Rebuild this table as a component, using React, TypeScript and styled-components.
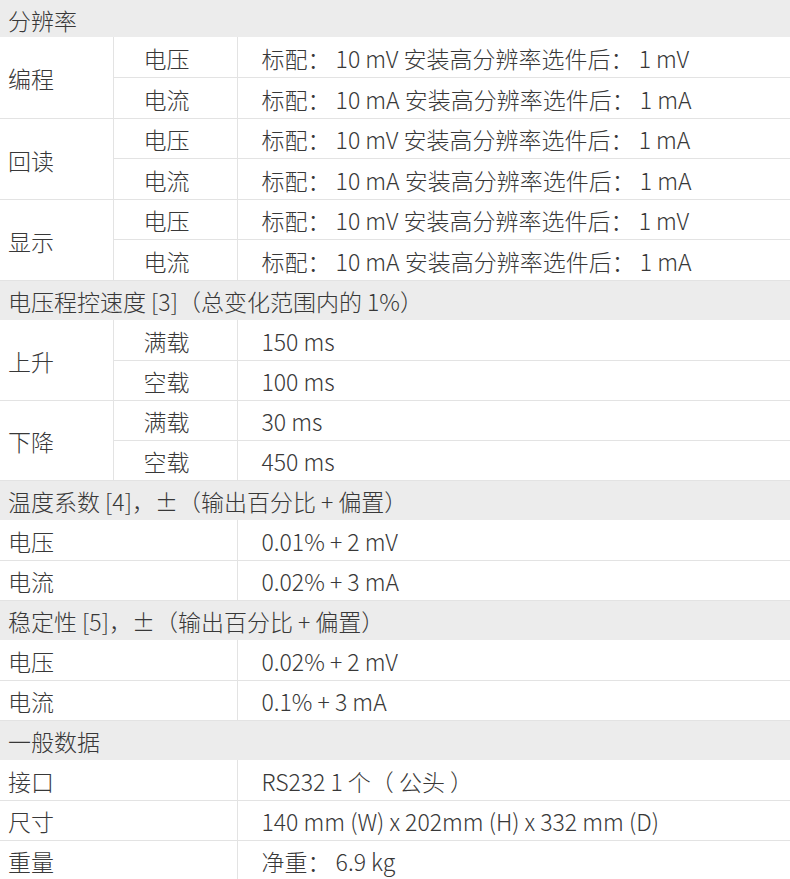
import React from 'react';
import styled, { createGlobalStyle } from 'styled-components';

const GlobalStyle = createGlobalStyle`
	html, body {
		margin: 0;
		padding: 0;
		background: #ffffff;
	}
	body {
		font-family: "Noto Sans CJK SC", "Noto Sans", sans-serif;
		font-weight: 300;
		color: #383838;
	}
`;

const Table = styled.table`
	width: 790px;
	border-collapse: collapse;
	table-layout: fixed;
	font-size: 23px;
	line-height: 1;
`;

const Col = styled.col<{ w?: number }>`
	width: ${({ w }) => (w ? `${w}px` : 'auto')};
`;

const HeadRow = styled.tr<{ h?: number }>`
	height: ${({ h }) => h || 40}px;
	background: #ececec;
`;

const HeadCell = styled.td`
	padding: 3px 0 0 8px;
	white-space: nowrap;
	vertical-align: middle;
`;

const Row = styled.tr<{ h?: number }>`
	height: ${({ h }) => h || 40}px;
	border-bottom: 1px solid #e3e3e3;
`;

const Cell = styled.td<{ pad?: number }>`
	padding: 3px 0 0 ${({ pad }) => pad ?? 8}px;
	white-space: nowrap;
	vertical-align: middle;
	border-right: 1px solid #e3e3e3;
	&:last-child {
		border-right: none;
	}
`;

type Pair = [string, string];

// grouped sections: label spans its sub-rows
const groups: { title: string; rows: [string, Pair[]][]; h?: number; rowH?: number }[] = [
	{
		title: '分辨率',
		h: 37,
		rowH: 40.5,
		rows: [
			['编程', [['电压', '标配： 10 mV 安装高分辨率选件后： 1 mV'], ['电流', '标配： 10 mA 安装高分辨率选件后： 1 mA']]],
			['回读', [['电压', '标配： 10 mV 安装高分辨率选件后： 1 mA'], ['电流', '标配： 10 mA 安装高分辨率选件后： 1 mA']]],
			['显示', [['电压', '标配： 10 mV 安装高分辨率选件后： 1 mV'], ['电流', '标配： 10 mA 安装高分辨率选件后： 1 mA']]],
		],
	},
	{
		title: '电压程控速度 [3]（总变化范围内的 1%）',
		rows: [
			['上升', [['满载', '150 ms'], ['空载', '100 ms']]],
			['下降', [['满载', '30 ms'], ['空载', '450 ms']]],
		],
	},
];

// flat sections: label + value
const flat: { title: string; rows: Pair[] }[] = [
	{ title: '温度系数 [4]，±（输出百分比 + 偏置）', rows: [['电压', '0.01% + 2 mV'], ['电流', '0.02% + 3 mA']] },
	{ title: '稳定性 [5]，±（输出百分比 + 偏置）', rows: [['电压', '0.02% + 2 mV'], ['电流', '0.1% + 3 mA']] },
	{ title: '一般数据', rows: [['接口', 'RS232 1 个（ 公头 ）'], ['尺寸', '140 mm (W) x 202mm (H) x 332 mm (D)'], ['重量', '净重： 6.9 kg']] },
];

export default function App() {
	return (
		<>
			<GlobalStyle />
			<Table>
				<colgroup>
					<Col w={113} />
					<Col w={124} />
					<Col />
				</colgroup>
				<tbody>
					{groups.map((g) => (
						<React.Fragment key={g.title}>
							<HeadRow h={g.h}>
								<HeadCell colSpan={3}>{g.title}</HeadCell>
							</HeadRow>
							{g.rows.map(([label, items]) =>
								items.map(([sub, value], i) => (
									<Row key={label + sub} h={g.rowH}>
										{i === 0 && <Cell rowSpan={items.length}>{label}</Cell>}
										<Cell pad={30}>{sub}</Cell>
										<Cell pad={24}>{value}</Cell>
									</Row>
								)),
							)}
						</React.Fragment>
					))}
					{flat.map((g) => (
						<React.Fragment key={g.title}>
							<HeadRow>
								<HeadCell colSpan={3}>{g.title}</HeadCell>
							</HeadRow>
							{g.rows.map(([label, value]) => (
								<Row key={label}>
									<Cell colSpan={2}>{label}</Cell>
									<Cell pad={24}>{value}</Cell>
								</Row>
							))}
						</React.Fragment>
					))}
				</tbody>
			</Table>
		</>
	);
}
